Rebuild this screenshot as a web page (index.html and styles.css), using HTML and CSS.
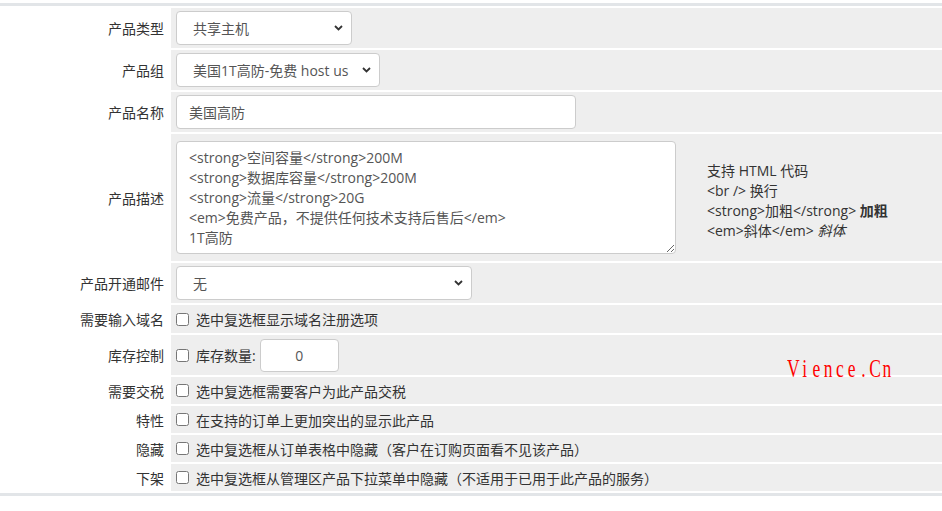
FILE: index.html
```html
<!DOCTYPE html>
<html lang="zh-CN">
<head>
<meta charset="utf-8">
<title>产品设置</title>
<link rel="stylesheet" href="styles.css">
</head>
<body>
<div class="page">
  <div class="rule rule-top"></div>
  <div class="form">
    <div class="row">
      <div class="label">产品类型</div>
      <div class="field">
        <span class="sel sel-type"><select><option>共享主机</option></select><svg class="chev" width="9" height="6" viewBox="0 0 9 6"><polyline points="1,1 4.5,4.5 8,1" fill="none" stroke="#333" stroke-width="1.8"/></svg></span>
      </div>
    </div>
    <div class="row">
      <div class="label">产品组</div>
      <div class="field">
        <span class="sel sel-group"><select><option>美国1T高防-免费 host us</option></select><svg class="chev" width="9" height="6" viewBox="0 0 9 6"><polyline points="1,1 4.5,4.5 8,1" fill="none" stroke="#333" stroke-width="1.8"/></svg></span>
      </div>
    </div>
    <div class="row">
      <div class="label">产品名称</div>
      <div class="field">
        <input class="input input-name" type="text" value="美国高防">
      </div>
    </div>
    <div class="row row-desc">
      <div class="label">产品描述</div>
      <div class="field field-desc">
        <textarea class="desc">&lt;strong&gt;空间容量&lt;/strong&gt;200M
&lt;strong&gt;数据库容量&lt;/strong&gt;200M
&lt;strong&gt;流量&lt;/strong&gt;20G
&lt;em&gt;免费产品，不提供任何技术支持后售后&lt;/em&gt;
1T高防</textarea>
        <div class="help">
          <div>支持 HTML 代码</div>
          <div>&lt;br /&gt; 换行</div>
          <div>&lt;strong&gt;加粗&lt;/strong&gt; <strong>加粗</strong></div>
          <div>&lt;em&gt;斜体&lt;/em&gt; <em>斜体</em></div>
        </div>
      </div>
    </div>
    <div class="row">
      <div class="label">产品开通邮件</div>
      <div class="field">
        <span class="sel sel-mail"><select><option>无</option></select><svg class="chev" width="9" height="6" viewBox="0 0 9 6"><polyline points="1,1 4.5,4.5 8,1" fill="none" stroke="#333" stroke-width="1.8"/></svg></span>
      </div>
    </div>
    <div class="row row-check row-first-check">
      <div class="label">需要输入域名</div>
      <div class="field"><label class="check"><input type="checkbox">选中复选框显示域名注册选项</label></div>
    </div>
    <div class="row">
      <div class="label">库存控制</div>
      <div class="field"><label class="check"><input type="checkbox">库存数量:</label><input class="input input-qty" type="text" value="0"></div>
    </div>
    <div class="row row-check">
      <div class="label">需要交税</div>
      <div class="field"><label class="check"><input type="checkbox">选中复选框需要客户为此产品交税</label></div>
    </div>
    <div class="row row-check">
      <div class="label">特性</div>
      <div class="field"><label class="check"><input type="checkbox">在支持的订单上更加突出的显示此产品</label></div>
    </div>
    <div class="row row-check">
      <div class="label">隐藏</div>
      <div class="field"><label class="check"><input type="checkbox">选中复选框从订单表格中隐藏（客户在订购页面看不见该产品）</label></div>
    </div>
    <div class="row row-check">
      <div class="label">下架</div>
      <div class="field"><label class="check"><input type="checkbox">选中复选框从管理区产品下拉菜单中隐藏（不适用于已用于此产品的服务）</label></div>
    </div>
  </div>
  <div class="rule rule-bottom"></div>
  <div class="watermark"><span>V</span><span>i</span><span>e</span><span>n</span><span>c</span><span>e</span><span>.</span><span>C</span><span>n</span></div>
</div>
</body>
</html>
```
FILE: styles.css
```css
html, body {
  margin: 0;
  padding: 0;
  background: #ffffff;
}
body {
  font-family: "Open Sans", "Noto Sans CJK SC", sans-serif;
  font-size: 14px;
  color: #333333;
}
.page {
  position: relative;
  width: 942px;
  height: 511px;
}
.rule {
  height: 3px;
  background: #e2e5e8;
}
.rule-top {
  margin-top: 3px;
  margin-bottom: 2px;
}
.form {
  display: flex;
  flex-direction: column;
  gap: 2px;
}
.rule-bottom {
  margin-top: 2px;
}
.row {
  display: grid;
  grid-template-columns: 169px 1fr;
  column-gap: 2px;
  height: 40px;
}
.row-check {
  height: 27px;
}
.row-first-check {
  height: 28px;
}
.row-desc {
  height: 127px;
}
.label {
  display: flex;
  align-items: center;
  justify-content: flex-end;
  padding-right: 5px;
  white-space: nowrap;
}
.field {
  background: #eeeeee;
  display: flex;
  align-items: center;
  padding-left: 5px;
}
.sel {
  position: relative;
  display: inline-block;
}
.sel select {
  -webkit-appearance: none;
  appearance: none;
  box-sizing: border-box;
  height: 34px;
  border: 1px solid #cccccc;
  border-radius: 4px;
  background: #ffffff;
  font-family: "Open Sans", "Noto Sans CJK SC", sans-serif;
  font-size: 14px;
  color: #555555;
  padding: 0 24px 0 16px;
  margin: 0;
  display: block;
}
.sel-type select { width: 176px; }
.sel-group select { width: 204px; }
.sel-mail select { width: 296px; }
.chev {
  position: absolute;
  right: 9px;
  top: 14px;
  pointer-events: none;
}
.input {
  box-sizing: border-box;
  height: 34px;
  border: 1px solid #cccccc;
  border-radius: 4px;
  background: #ffffff;
  font-family: "Open Sans", "Noto Sans CJK SC", sans-serif;
  font-size: 14px;
  color: #555555;
  padding: 0 12px;
  margin: 0;
}
.input-name { width: 400px; }
.input-qty {
  width: 79px;
  height: 33px;
  text-align: center;
  margin-left: 4px;
}
.field-desc {
  align-items: center;
}
.desc {
  box-sizing: border-box;
  width: 500px;
  height: 113px;
  border: 1px solid #cccccc;
  border-radius: 4px;
  background: #ffffff;
  font-family: "Open Sans", "Noto Sans CJK SC", sans-serif;
  font-size: 14px;
  line-height: 20px;
  color: #555555;
  padding: 6px 12px;
  margin: 0;
  resize: both;
  overflow: hidden;
}
.help {
  margin-left: 31px;
  margin-top: 6px;
  line-height: 20px;
  color: #333333;
}
.help strong { font-weight: 700; }
.help em { font-style: italic; }
.check {
  display: flex;
  align-items: center;
  white-space: nowrap;
}
.check input {
  width: 13px;
  height: 13px;
  margin: 0 7px 0 0;
}
.watermark {
  position: absolute;
  left: 787px;
  top: 352px;
  display: flex;
  font-family: "Liberation Serif", serif;
  font-size: 25px;
  line-height: 28px;
  color: #ff0000;
  transform: scaleX(0.7);
  transform-origin: left top;
  white-space: nowrap;
}
.watermark span {
  display: block;
  width: 16.8px;
  text-align: center;
}
```
